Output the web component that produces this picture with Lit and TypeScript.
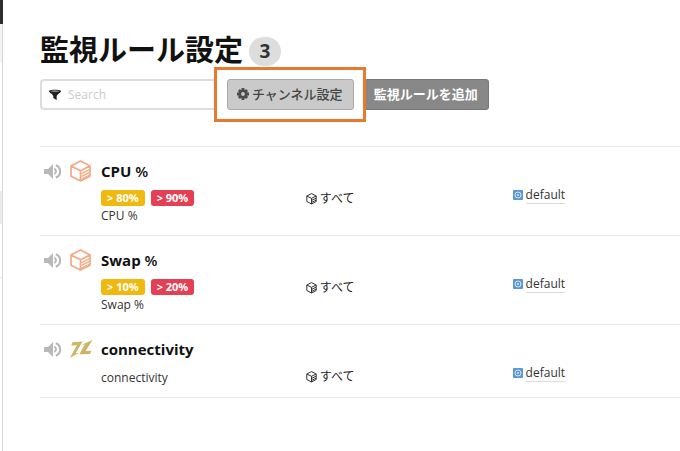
import { LitElement, html, css, svg } from "lit";
import { customElement, property } from "lit/decorators.js";

interface Rule {
  name: string;
  strong: string;
  suffix: string;
  kind: "metric" | "connectivity";
  warning?: string;
  critical?: string;
}

const rules: Rule[] = [
  { name: "CPU %", strong: "CPU", suffix: " %", kind: "metric", warning: "> 80%", critical: "> 90%" },
  { name: "Swap %", strong: "Swap", suffix: " %", kind: "metric", warning: "> 10%", critical: "> 20%" },
  { name: "connectivity", strong: "connectivity", suffix: "", kind: "connectivity" },
];

const shapes = {
  speaker: svg`
    <path d="M0 5h4l5-5v15l-5-5H0z" fill="#b9b9b9"/>
    <path d="M10.300 4.600a3 3 0 0 1 0 5.400" fill="none" stroke="#b9b9b9" stroke-width="2"/>
    <path d="M11.800 1.200a6.600 6.600 0 0 1 0 12.400" fill="none" stroke="#b9b9b9" stroke-width="2.200"/>`,
  metric: svg`
    <g fill="none" stroke="#f3a983" stroke-width="1.7" stroke-linejoin="round">
      <path d="M10.500 1 20 6v10.200L10.500 21 1 16.200V6zM1 6l9.500 4.800L20 6M10.500 10.800V21"/>
      <path d="M11.500 13.600 19.500 9.600M11.500 16.400l8-4.100M11.500 19l8-4" stroke-width="1.300"/>
    </g>`,
  connectivity: svg`
    <path d="M2.500 3.200 12.600 2.400 5.600 14.200 9 13.900 0 18.800 6.800 6.300 1.300 6.600z" fill="#cdb566"/>
    <path d="M22.500 1 15.600 12 21.600 11.700 20 14.900 9.400 15.300 14.700 5.600 11.900 5.800z" fill="#cdb566"/>`,
  filter: svg`<path d="M0 2.200C0 .4 12 .4 12 2.200c0 1-4.300 3.600-4.300 5V11L4.300 9V7.200C4.300 5.800 0 3.200 0 2.200z" fill="#222"/>
    <ellipse cx="6" cy="2.100" rx="4.300" ry=".6" fill="#bbb"/>`,
  gear: svg`<g stroke="#4c4c4c" stroke-width="2.800">
      <path d="M6 0v12M0 6h12M1.900 1.900l8.200 8.200M10.100 1.900l-8.200 8.200"/></g>
    <circle cx="6" cy="6" r="4.500" fill="#4c4c4c"/><circle cx="6" cy="6" r="1.900" fill="#cacaca"/>`,
  cube: svg`<path d="M5.500.6 10.200 3v5.500L5.500 11 .8 8.500V3zM.8 3l4.700 2.300L10.200 3M5.500 5.300V11" fill="none" stroke="#333" stroke-linejoin="round"/>
    <path d="M6 7.200l4-2M6 9.200l4-2" stroke="#333"/>`,
  service: svg`<rect width="10" height="10" rx="1" fill="#5b97d2"/>
    <circle cx="5" cy="5" r="3" fill="none" stroke="#d9e8f6"/><circle cx="5" cy="5" r="1" fill="#d9e8f6"/>`,
};

const boxes: Record<keyof typeof shapes, [number, number]> = {
  speaker: [17, 15],
  metric: [21, 22],
  connectivity: [23, 20],
  filter: [12, 11],
  gear: [12, 12],
  cube: [11, 12],
  service: [10, 10],
};

@customElement("ui-icon")
export class UiIcon extends LitElement {
  @property() name: keyof typeof shapes = "cube";
  static styles = css`
    :host { display: inline-flex; flex: none; }
    svg { display: block; }
  `;
  render() {
    const [w, h] = boxes[this.name];
    return html`<svg width=${w} height=${h} viewBox="0 0 ${w} ${h}" aria-hidden="true">${shapes[this.name]}</svg>`;
  }
}

@customElement("app-root")
export class AppRoot extends LitElement {
  static styles = css`
    :host {
      display: flex;
      min-height: 100vh;
      background: #fff;
      color: #333;
      font: 12px/18px "Open Sans", "Noto Sans CJK JP", sans-serif;
    }
    * { box-sizing: border-box; }
    .rail {
      flex: none;
      width: 3px;
      border-right: 1px solid #d8d8d8;
    }
    .brand { height: 24px; background: #2d2d2d; margin-right: -1px; }
    .org { height: 38px; background: #f3f3f3; }
    .links { height: 129px; }
    .current { height: 33px; background: #ececec; }
    .more { height: 54px; border-bottom: 1px solid #eee; }
    main { flex: 1; min-width: 0; padding: 30px 0 24px 37px; }
    header { display: flex; align-items: center; gap: 6px; height: 40px; }
    h1 {
      margin: 0;
      color: #111;
      font: bold 29px/40px "Open Sans", "Noto Sans CJK JP", sans-serif;
      white-space: nowrap;
    }
    .count {
      min-width: 32px;
      height: 29px;
      margin-top: 2px;
      border-radius: 15px;
      background: #ddd;
      color: #333;
      font-size: 19px;
      font-weight: bold;
      line-height: 29px;
      text-align: center;
    }
    .toolbar { display: flex; align-items: center; margin-top: 9px; }
    .search {
      display: flex;
      align-items: center;
      gap: 7px;
      width: 187px;
      height: 31px;
      padding: 0 7px;
      border: 2px solid #ddd;
      border-radius: 4px;
    }
    .search input {
      flex: 1;
      min-width: 0;
      padding: 0;
      border: 0;
      outline: 0;
      background: none;
      font: inherit;
      color: #333;
    }
    .search input::placeholder { color: #ccc; }
    button {
      display: flex;
      align-items: center;
      gap: 3px;
      height: 31px;
      padding: 0 10px 2px 9px;
      border-radius: 3px;
      font: 13px/20px "Open Sans", "Noto Sans CJK JP", sans-serif;
      white-space: nowrap;
    }
    .channel { border: 1px solid #aaa; background: #cacaca; color: #444; font-weight: 500; }
    .add { margin-left: 10px; border: 1px solid #777; background: #888; color: #fff; font-weight: bold; }
    .spot { position: relative; z-index: 1; }
    .spot::before {
      content: "";
      position: absolute;
      z-index: -1;
      inset: -12px -12px -12px -13px;
      border: 3px solid #e8792f;
      background: #fff;
    }
    table {
      width: 100%;
      margin-top: 36px;
      border-collapse: collapse;
      table-layout: fixed;
      border-bottom: 1px solid #e8e8e8;
    }
    td { padding: 12px 0 10px; border-top: 1px solid #e8e8e8; vertical-align: top; }
    .c-icon { width: 61px; }
    .c-name { width: 32%; }
    .c-target { width: 32%; }
    .icons { display: flex; align-items: center; gap: 9px; height: 24px; padding-left: 4px; }
    .title { margin: 0; color: #111; font-size: 15px; line-height: 24px; font-weight: bold; }
    .suffix { font-weight: 600; }
    .tags { display: flex; gap: 6px; margin-top: 7px; }
    .tag {
      height: 16px;
      padding: 0 6px;
      border-radius: 3px;
      color: #fff;
      font-size: 11px;
      font-weight: bold;
      line-height: 16px;
    }
    .warning { background: #f0b90f; }
    .critical { background: #e43f53; }
    .metric { margin: 1px 0 0; line-height: 18px; }
    .metric.alone { margin-top: 8px; }
    .target, .service { display: flex; align-items: center; gap: 3px; height: 18px; }
    .target { margin-top: 31px; color: #222; }
    .service { margin-top: 27px; padding-left: 2px; }
    .service a { color: #333; text-decoration: none; line-height: 17px; border-bottom: 1px solid #ddd; }
  `;

  private row(r: Rule) {
    return html`<tr>
      <td>
        <div class="icons"><ui-icon name="speaker"></ui-icon><ui-icon name=${r.kind}></ui-icon></div>
      </td>
      <td>
        <p class="title">${r.strong}<span class="suffix">${r.suffix}</span></p>
        ${r.warning
          ? html`<div class="tags"><span class="tag warning">${r.warning}</span><span class="tag critical">${r.critical}</span></div>`
          : ""}
        <p class="metric ${r.warning ? "" : "alone"}">${r.name}</p>
      </td>
      <td><div class="target"><ui-icon name="cube"></ui-icon>すべて</div></td>
      <td><div class="service"><ui-icon name="service"></ui-icon><a href="#default">default</a></div></td>
    </tr>`;
  }

  render() {
    return html`
      <div class="rail">
        <div class="brand"></div>
        <div class="org"></div>
        <div class="links"></div>
        <div class="current"></div>
        <div class="more"></div>
      </div>
      <main>
        <header><h1>監視ルール設定</h1><span class="count">${rules.length}</span></header>
        <div class="toolbar">
          <label class="search"><ui-icon name="filter"></ui-icon><input type="text" placeholder="Search" aria-label="Search" /></label>
          <div class="spot"><button class="channel" type="button"><ui-icon name="gear"></ui-icon>チャンネル設定</button></div>
          <button class="add" type="button">監視ルールを追加</button>
        </div>
        <table>
          <colgroup><col class="c-icon" /><col class="c-name" /><col class="c-target" /><col /></colgroup>
          <tbody>${rules.map((r) => this.row(r))}</tbody>
        </table>
      </main>
    `;
  }
}
